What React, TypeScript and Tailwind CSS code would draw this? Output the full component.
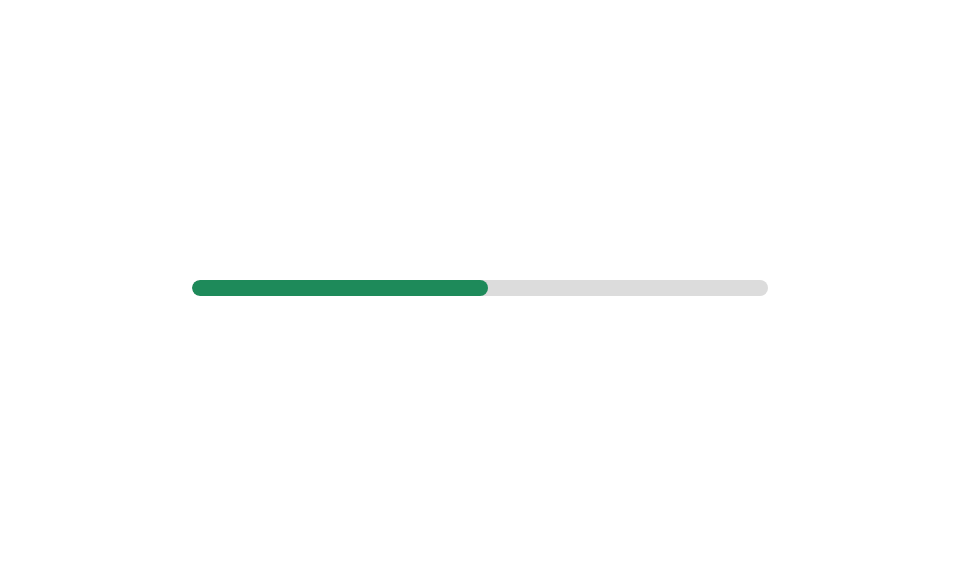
export default function App() {
  return (
    <div className="flex h-[576px] w-[960px] items-center justify-center bg-white">
      <div className="h-4 w-[576px] overflow-hidden rounded-full bg-[#dcdcdc]">
        <div className="h-full w-[296px] rounded-full bg-[#1e8a5a]" />
      </div>
    </div>
  );
}
